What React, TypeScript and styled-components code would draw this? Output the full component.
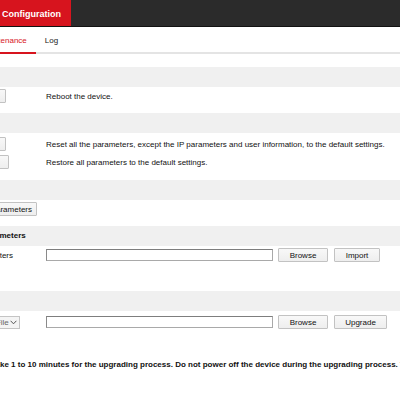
import React from 'react'
import styled, { createGlobalStyle } from 'styled-components'

const GlobalStyle = createGlobalStyle`
  html, body {
    margin: 0;
    padding: 0;
    background: #fff;
    overflow: hidden;
  }
  body {
    font-family: "Liberation Sans", Arial, sans-serif;
    font-size: 8px;
    color: #111;
  }
`

// the screenshot is cropped: the page's left edge sits outside the window
const Frame = styled.div`
  margin-left: -60px;
  width: 560px;
`

const TopBar = styled.div`
  display: flex;
  height: 26px;
  background: #2b2b2b;
  border-bottom: 1px solid #121212;
`

const BrandTab = styled.div`
  width: 131px;
  box-sizing: border-box;
  display: flex;
  align-items: center;
  justify-content: flex-end;
  padding: 2px 10px 0 0;
  background: #d7141e;
  color: #fff;
  font-size: 9px;
  font-weight: bold;
`

const Tabs = styled.div`
  display: flex;
  height: 25px;
  padding-left: 32px;
  border-bottom: 2px solid #e4e4e4;
`

const Tab = styled.div<{ $active?: boolean }>`
  display: flex;
  align-items: center;
  padding: 2px 9px 0;
  margin-bottom: -2px;
  color: ${p => (p.$active ? '#d7141e' : '#222')};
  border-bottom: 2px solid ${p => (p.$active ? '#d7141e' : 'transparent')};
`

const Content = styled.div`
  padding-top: 13px;
`

const Section = styled.section<{ $gap: number }>`
  margin-bottom: ${p => p.$gap}px;
`

const SectionHeader = styled.div`
  height: 20px;
  line-height: 20px;
  padding-left: 15px;
  background: #f0f0f0;
  font-weight: bold;
  color: #111;
`

const Rows = styled.div<{ $pad?: number }>`
  padding-top: ${p => p.$pad ?? 0}px;
`

const Row = styled.div`
  display: grid;
  grid-template-columns: 106px 1fr;
  align-items: center;
  height: 18px;
`

const ActionCell = styled.div`
  padding-left: 19px;
  display: flex;
  align-items: center;
`

const LabelCell = styled.div`
  padding-left: 5px;
  white-space: nowrap;
`

const Description = styled.div`
  white-space: nowrap;
`

const Controls = styled.div`
  display: flex;
  align-items: center;
`

const Button = styled.button<{ $w: number; $gap?: number }>`
  width: ${p => p.$w}px;
  height: 14px;
  margin-left: ${p => p.$gap ?? 0}px;
  padding: 0;
  border: 1px solid #c2c2c2;
  border-radius: 1px;
  background: linear-gradient(#f8f8f8, #eeeeee);
  font-family: inherit;
  font-size: 8px;
  color: #111;
  white-space: nowrap;
`

const FileInput = styled.div`
  width: 227px;
  height: 12px;
  box-sizing: border-box;
  border: 1px solid #a9a9a9;
  border-top-color: #7e7e7e;
  border-left-color: #8a8a8a;
  background: #fff;
`

const SelectBox = styled.div`
  width: 61px;
  height: 13px;
  box-sizing: border-box;
  display: flex;
  align-items: center;
  justify-content: space-between;
  padding: 0 2px 0 3px;
  border: 1px solid #c4c4c4;
  background: #f4f4f4;
  color: #666;
  white-space: nowrap;
`

const Note = styled.div`
  margin-top: 25px;
  height: 18px;
  line-height: 18px;
  padding-left: 8px;
  font-weight: bold;
  white-space: nowrap;
  color: #111;
`

const Chevron = () => (
  <svg width="7" height="5" viewBox="0 0 7 5">
    <path d="M0.6 0.8 L3.5 3.8 L6.4 0.8" fill="none" stroke="#555" strokeWidth="1" />
  </svg>
)

export default function App() {
  return (
    <Frame>
      <GlobalStyle />
      <TopBar>
        <BrandTab>Configuration</BrandTab>
      </TopBar>
      <Tabs>
        <Tab $active>Maintenance</Tab>
        <Tab>Log</Tab>
      </Tabs>
      <Content>
        <Section $gap={8}>
          <SectionHeader>Reboot</SectionHeader>
          <Row>
            <ActionCell>
              <Button $w={47}>Reboot</Button>
            </ActionCell>
            <Description>Reboot the device.</Description>
          </Row>
        </Section>

        <Section $gap={9}>
          <SectionHeader>Default</SectionHeader>
          <Rows $pad={2}>
            <Row>
              <ActionCell>
                <Button $w={47}>Restore</Button>
              </ActionCell>
              <Description>
                Reset all the parameters, except the IP parameters and user information, to the default settings.
              </Description>
            </Row>
            <Row>
              <ActionCell>
                <Button $w={50}>Default</Button>
              </ActionCell>
              <Description>Restore all parameters to the default settings.</Description>
            </Row>
          </Rows>
        </Section>

        <Section $gap={8}>
          <SectionHeader>Export</SectionHeader>
          <Row>
            <ActionCell>
              <Button $w={78}>Device Parameters</Button>
            </ActionCell>
          </Row>
        </Section>

        <Section $gap={27}>
          <SectionHeader>Import Parameters</SectionHeader>
          <Row>
            <LabelCell>Device Parameters</LabelCell>
            <Controls>
              <FileInput />
              <Button $w={50} $gap={5}>Browse</Button>
              <Button $w={46} $gap={6}>Import</Button>
            </Controls>
          </Row>
        </Section>

        <Section $gap={0}>
          <SectionHeader>Upgrade</SectionHeader>
          <Rows $pad={2}>
            <Row>
              <ActionCell>
                <SelectBox>
                  <span>Upgrade File</span>
                  <Chevron />
                </SelectBox>
              </ActionCell>
              <Controls>
                <FileInput />
                <Button $w={50} $gap={5}>Browse</Button>
                <Button $w={53} $gap={6}>Upgrade</Button>
              </Controls>
            </Row>
          </Rows>
          <Note>
            Note: It will take 1 to 10 minutes for the upgrading process. Do not power off the device during the upgrading process. The device reboots automatically after upgrading.
          </Note>
        </Section>
      </Content>
    </Frame>
  )
}
